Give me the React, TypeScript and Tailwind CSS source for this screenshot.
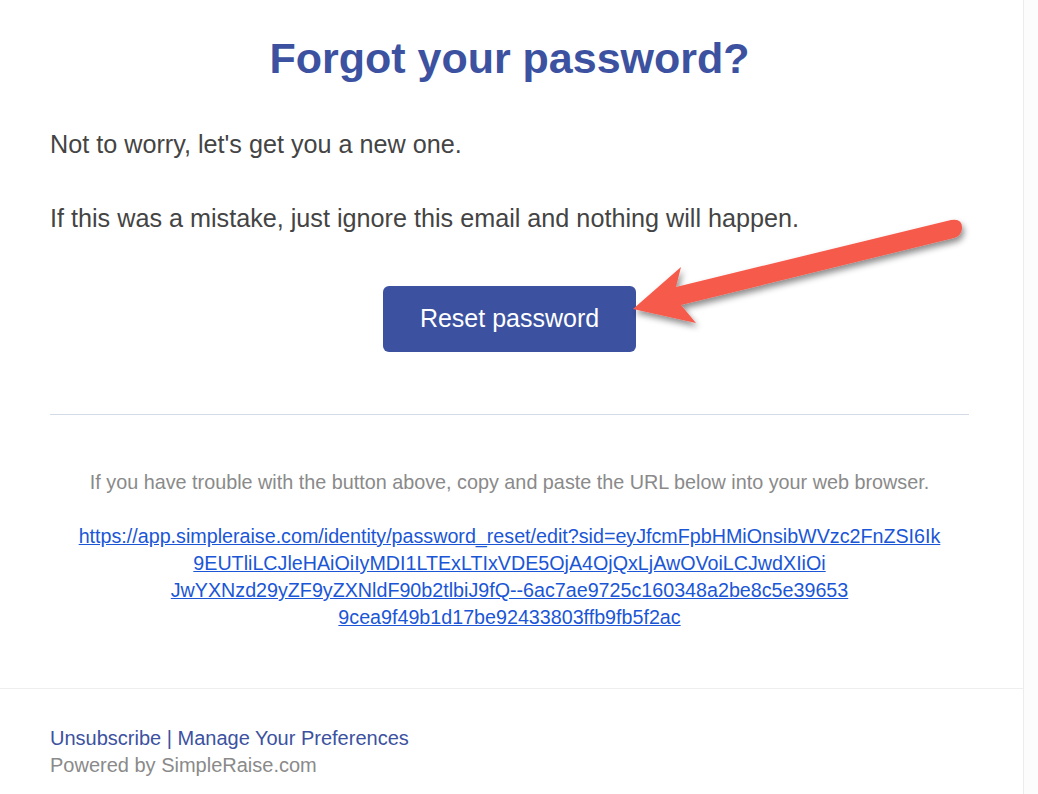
import React from 'react';

const urlLines = [
  'https://app.simpleraise.com/identity/password_reset/edit?sid=eyJfcmFpbHMiOnsibWVzc2FnZSI6Ik',
  '9EUTliLCJleHAiOiIyMDI1LTExLTIxVDE5OjA4OjQxLjAwOVoiLCJwdXIiOi',
  'JwYXNzd29yZF9yZXNldF90b2tlbiJ9fQ--6ac7ae9725c160348a2be8c5e39653',
  '9cea9f49b1d17be92433803ffb9fb5f2ac',
];

function Arrow() {
  return (
    <svg
      className="absolute left-0 top-0 pointer-events-none"
      width="1038"
      height="794"
      viewBox="0 0 1038 794"
    >
      <defs>
        <filter id="arrowShadow" x="-10%" y="-30%" width="130%" height="180%">
          <feDropShadow dx="2" dy="4" stdDeviation="3" floodColor="#000" floodOpacity="0.45" />
        </filter>
      </defs>
      <path
        d="M633,309 L681,267 L676,287 L951,220 Q963,218 962,229 Q961,236 954,238 L681,305 L696,323 Z"
        fill="#f65a4c"
        filter="url(#arrowShadow)"
      />
    </svg>
  );
}

export default function App() {
  return (
    <div className="relative min-h-screen w-full bg-[#fcfcfc] font-['Liberation_Sans',Arial,sans-serif]">
      <div className="w-[1024px] min-h-screen bg-white border-r border-[#ececec]">
        <div className="pl-[50px] pr-[54px] pt-[32px] pb-[57px]">
          <h1 className="text-center text-[43px] leading-[52px] font-bold text-[#3c52a0]">
            Forgot your password?
          </h1>

          <p className="mt-[46px] text-[25.2px] leading-[28px] text-[#444]">
            Not to worry, let's get you a new one.
          </p>
          <p className="mt-[46px] text-[25.2px] leading-[28px] text-[#444]">
            If this was a mistake, just ignore this email and nothing will happen.
          </p>

          <div className="mt-[54px] flex justify-center">
            <button className="h-[66px] w-[253px] rounded-[6px] bg-[#3c52a0] text-[25px] text-white">
              Reset password
            </button>
          </div>

          <div className="mt-[62px] h-px bg-[#d3dbe6]" />

          <p className="mt-[55px] text-center text-[19.8px] leading-[24px] text-[#8a8a8a]">
            If you have trouble with the button above, copy and paste the URL below into your web browser.
          </p>

          <p className="mt-[29px] text-center text-[19.7px] leading-[27px]">
            {urlLines.map((line, i) => (
              <React.Fragment key={i}>
                <a href="#" className="text-[#1a56d6] underline">
                  {line}
                </a>
                {i < urlLines.length - 1 && <br />}
              </React.Fragment>
            ))}
          </p>
        </div>

        <div className="border-t border-[#eeeeee] pl-[50px] pt-[36px] pb-[20px]">
          <p className="text-[20px] leading-[27px] text-[#3c52a0]">
            <a href="#">Unsubscribe</a> | <a href="#">Manage Your Preferences</a>
          </p>
          <p className="text-[20px] leading-[27px] text-[#8a8a8a]">Powered by SimpleRaise.com</p>
        </div>
      </div>
      <Arrow />
    </div>
  );
}
